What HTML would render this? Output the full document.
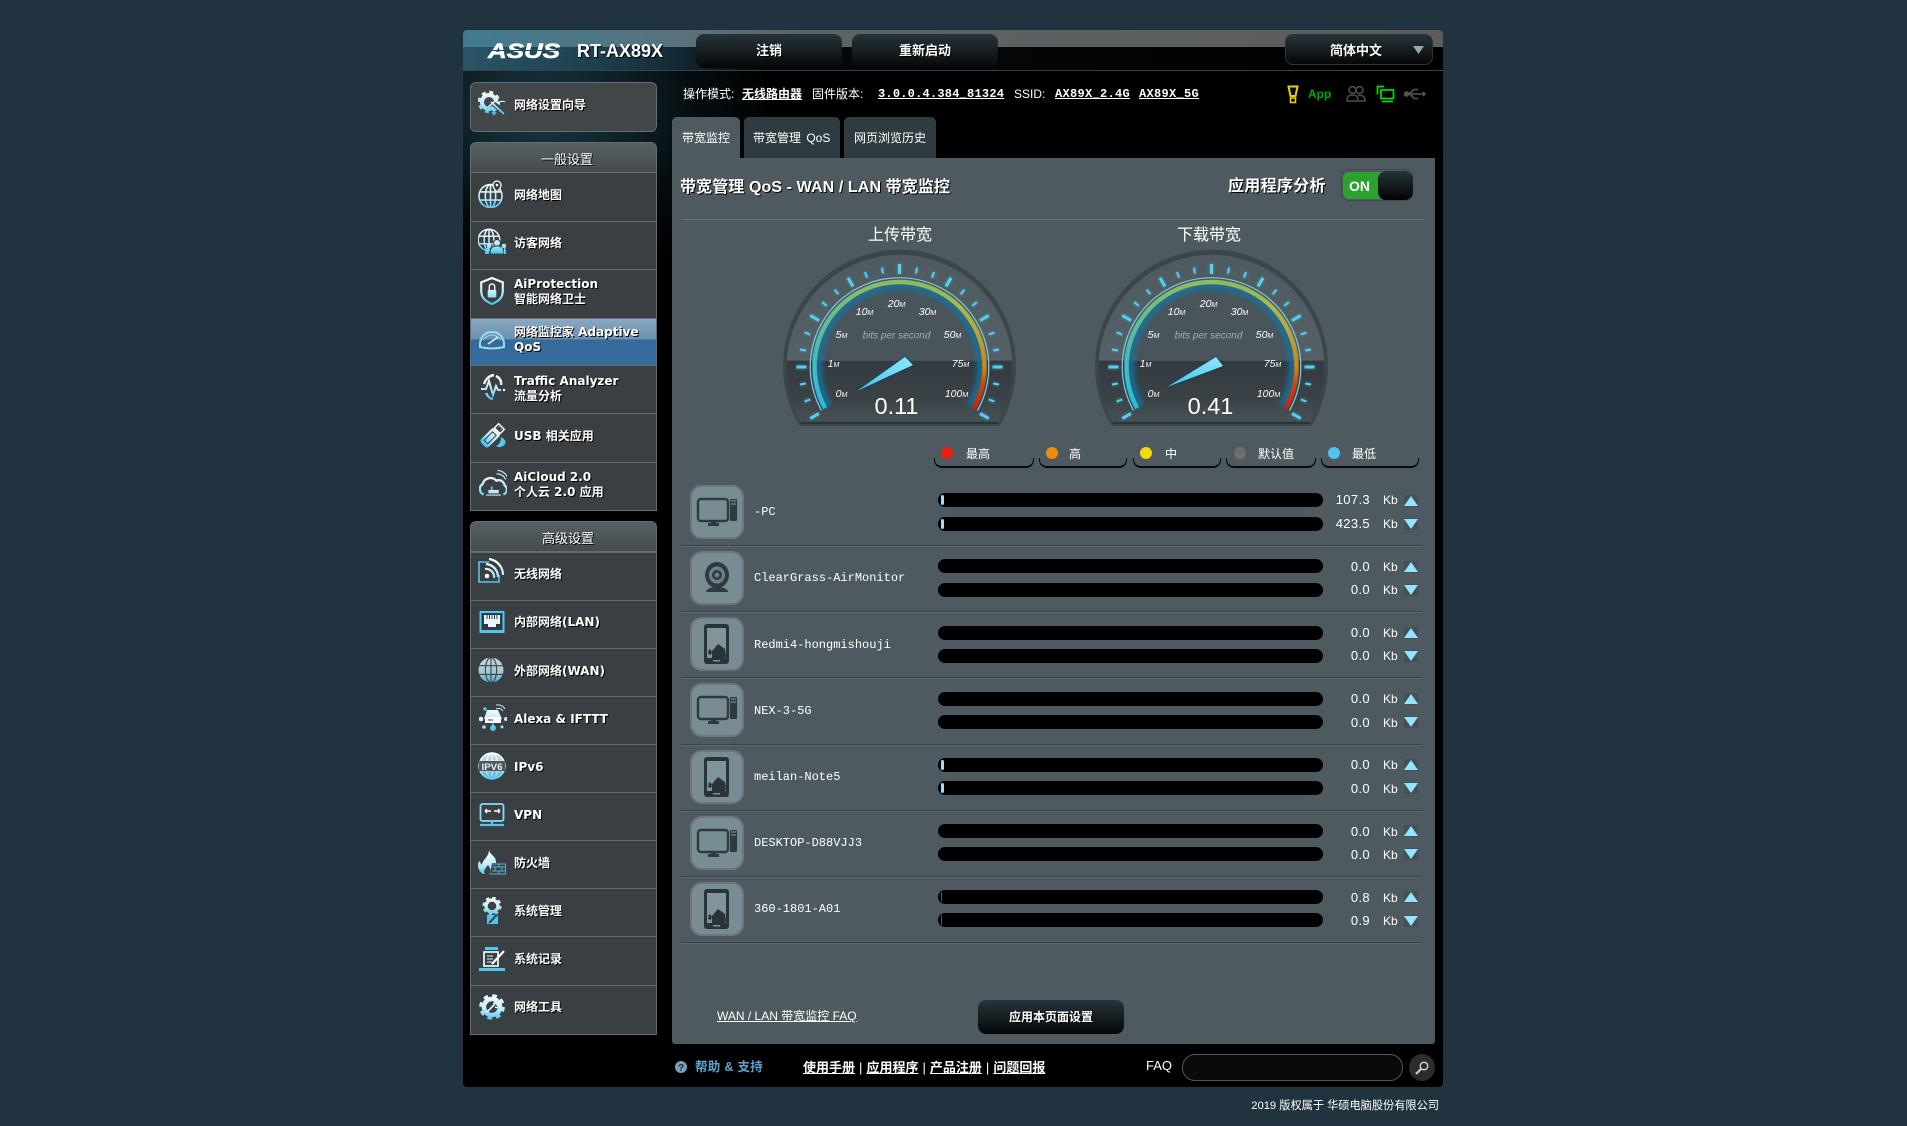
<!DOCTYPE html>
<html lang="zh-CN"><head><meta charset="utf-8"><title>ASUS RT-AX89X</title>
<style>
html,body{margin:0;padding:0;width:1907px;height:1126px;overflow:hidden;background:#21333e}
body{position:relative;font-family:"Liberation Sans","Noto Sans CJK SC",sans-serif;color:#fff;font-size:12px}
.a,.t,svg.i{position:absolute}
.t{white-space:nowrap;line-height:14px}
.u{text-decoration:underline}
#main{position:absolute;left:463px;top:30px;width:980px;height:1057px;border-radius:4px;background:#000;overflow:hidden}
#hd{position:absolute;left:0;top:0;width:980px;height:41px;background:linear-gradient(90deg,#2a5567 0,#1f4252 12%,#16303c 20%,#06090b 30%,#000 100%)}
#hd2{position:absolute;left:0;top:0;width:980px;height:17px;background:linear-gradient(90deg,#417a90 0,#4f7684 14%,#5b7078 24%,#5d6365 34%,#5c5c5c 100%)}
#hl{position:absolute;left:6px;top:40px;width:974px;height:1px;background:#3a4144}
#glow{position:absolute;left:0;top:41px;width:300px;height:460px;background:radial-gradient(ellipse 240px 170px at 80px 40px,rgba(34,78,96,.75),rgba(10,24,30,.5) 65%,rgba(0,0,0,0) 100%)}
.hb{position:absolute;background:linear-gradient(#26343b,#050708);border-radius:8px;text-align:center;font-weight:bold;font-size:13px;text-shadow:1px 1px 0 #000}
.r{position:absolute;left:470px;width:187px;box-sizing:border-box;background:#393f43;border:1px solid #666c6f}
.m{position:absolute;left:514px;white-space:nowrap;font:bold 12px/15px "DejaVu Sans","Noto Sans CJK SC",sans-serif;color:#fff;text-shadow:1px 1px 0 #000}
.h{position:absolute;left:470px;width:187px;height:31px;box-sizing:border-box;background:linear-gradient(#566064,#454c50);border:1px solid #666c6f;border-radius:6px 6px 0 0}
.tab{position:absolute;top:117px;height:41px;border-radius:5px 5px 0 0;background:#2f3b41}
.sep{position:absolute;left:681px;width:741px;height:1px;background:#38444a;box-shadow:0 1px 0 #5d696e}
.dev{position:absolute;left:690px;width:50px;height:50px;border:2px solid #6f7779;border-radius:12px;background:#788c93;overflow:hidden}
.dev svg{display:block;width:50px;height:50px}
.n{position:absolute;left:755px;font:12px/14px "Liberation Mono",monospace;white-space:nowrap;color:#fff}
.b{position:absolute;left:938px;width:385px;height:14px;border-radius:7px;background:#000}
.f{position:absolute;left:941px;width:3px;height:10px;border-radius:2px;background:#96e2fb}
.v{position:absolute;left:1310px;width:60px;text-align:right;font-size:13px;line-height:14px;letter-spacing:.35px}
.k{position:absolute;left:1383px;font-size:12px;line-height:14px}
.lg{position:absolute;top:458px;box-sizing:border-box;border:solid #0a0a0a;border-width:0 1px 2px 1px;border-radius:0 0 8px 8px;height:10px}
.dt{position:absolute;top:447px;width:12px;height:12px;border-radius:50%}
</style></head><body>
<svg width="0" height="0" style="position:absolute"><defs>
<linearGradient id="ig" gradientUnits="userSpaceOnUse" x1="0" y1="-12" x2="0" y2="13"><stop offset="0" stop-color="#fff"/><stop offset=".55" stop-color="#bfeaf8"/><stop offset="1" stop-color="#38bfee"/></linearGradient>
<linearGradient id="arcl" gradientUnits="userSpaceOnUse" x1="0" y1="41" x2="0" y2="-85"><stop offset="0" stop-color="#22c0de"/><stop offset=".4" stop-color="#44bcc0"/><stop offset=".75" stop-color="#6cbb88"/><stop offset="1" stop-color="#8dbb60"/></linearGradient>
<linearGradient id="arcr" gradientUnits="userSpaceOnUse" x1="0" y1="-85" x2="0" y2="41"><stop offset="0" stop-color="#8dbb60"/><stop offset=".2" stop-color="#aab84a"/><stop offset=".45" stop-color="#bfa030"/><stop offset=".68" stop-color="#c8861c"/><stop offset=".8" stop-color="#c84c10"/><stop offset="1" stop-color="#d0200c"/></linearGradient>
<linearGradient id="lo" x1="0" y1="0" x2="0" y2="1"><stop offset="0" stop-color="#333a3f"/><stop offset=".55" stop-color="#3a4247"/><stop offset="1" stop-color="#4c565b"/></linearGradient>
<linearGradient id="up" x1="0" y1="0" x2="0" y2="1"><stop offset="0" stop-color="#4e5a60"/><stop offset="1" stop-color="#5b686e"/></linearGradient>
<linearGradient id="nd" x1="0" y1="1" x2="1" y2="0"><stop offset="0" stop-color="#3fc2ee"/><stop offset="1" stop-color="#90e8ff"/></linearGradient>
<filter id="bl" x="-30%" y="-30%" width="160%" height="160%"><feGaussianBlur stdDeviation="2.5"/></filter>
<filter id="bl1" x="-30%" y="-30%" width="160%" height="160%"><feGaussianBlur stdDeviation="1.5"/></filter>
<clipPath id="gc"><path d="M-98 57A113 113 0 1 1 98 57Z"/></clipPath>
<g id="ticks" stroke="#4dd3f6">
<g stroke-width="3"><path d="M-103 0H-93" transform="rotate(-30)"/><path d="M-103 0H-93" transform="rotate(0)"/><path d="M-103 0H-93" transform="rotate(30)"/><path d="M-103 0H-93" transform="rotate(60)"/><path d="M-103 0H-93" transform="rotate(90)"/><path d="M-103 0H-93" transform="rotate(120)"/><path d="M-103 0H-93" transform="rotate(150)"/><path d="M-103 0H-93" transform="rotate(180)"/><path d="M-103 0H-93" transform="rotate(210)"/></g>
<g stroke-width="2"><path d="M-101 0H-95" transform="rotate(-20)"/><path d="M-101 0H-95" transform="rotate(-10)"/><path d="M-101 0H-95" transform="rotate(10)"/><path d="M-101 0H-95" transform="rotate(20)"/><path d="M-101 0H-95" transform="rotate(40)"/><path d="M-101 0H-95" transform="rotate(50)"/><path d="M-101 0H-95" transform="rotate(70)"/><path d="M-101 0H-95" transform="rotate(80)"/><path d="M-101 0H-95" transform="rotate(100)"/><path d="M-101 0H-95" transform="rotate(110)"/><path d="M-101 0H-95" transform="rotate(130)"/><path d="M-101 0H-95" transform="rotate(140)"/><path d="M-101 0H-95" transform="rotate(160)"/><path d="M-101 0H-95" transform="rotate(170)"/><path d="M-101 0H-95" transform="rotate(190)"/><path d="M-101 0H-95" transform="rotate(200)"/></g>
</g>
<g id="gauge">
<path d="M-100 59A116.500 116.500 0 1 1 100 59Z" fill="#3b464b"/>
<g clip-path="url(#gc)">
<circle r="113" fill="url(#up)"/>
<rect x="-120" y="-7" width="240" height="70" fill="url(#lo)"/>
<path d="M-117 -7H117" stroke="#5b686d" stroke-width="1"/>
<path d="M-84 -7A84 84 0 0 1 84 -7Z" fill="#4a555b"/>
<path d="M-101.600 56H101.600" stroke="#2d3539" stroke-width="2.500"/>
</g>
<use href="#ticks" filter="url(#bl1)" opacity=".55"/>
<use href="#ticks"/>
<path d="M-71 39A81 81 0 1 1 71 39" fill="none" stroke="#19729f" stroke-width="8" filter="url(#bl)" opacity=".8"/>
<path d="M-74.300 41.200A85 85 0 0 1 0 -85" fill="none" stroke="url(#arcl)" stroke-width="4.500"/>
<path d="M0 -85A85 85 0 0 1 74.300 41.200" fill="none" stroke="url(#arcr)" stroke-width="4.500"/>
<path d="M-78 43.500A89.300 89.300 0 1 1 78 43.500" fill="none" stroke="#7cc6d8" stroke-width="1.300"/>
</g>
<g id="pc"><rect x="8" y="14" width="30" height="22" rx="3" fill="none" stroke="#2f3a3f" stroke-width="2.400"/><rect x="18" y="38" width="11" height="3" fill="#2f3a3f"/><path d="M21 36h5v2h-5z" fill="#2f3a3f"/><rect x="40" y="14" width="7" height="22" rx="1" fill="#2f3a3f"/><path d="M41 16h5M41 19h5" stroke="#8a9ca2" stroke-width="1"/></g>
<g id="ph"><rect x="14" y="7" width="25" height="40" rx="3" fill="#2a3438"/><rect x="17" y="11" width="19" height="30" fill="#7f949b"/><path d="M22 34l6-7 7 5 1 7-1 2H22z" fill="#2a3438"/><path d="M19 32l3 2-1 4-3-1z" fill="#2a3438"/><rect x="23" y="43" width="7" height="1.500" fill="#7f949b"/></g>
<g id="cam"><ellipse cx="25" cy="22" rx="12" ry="13" fill="#2f3a3f"/><ellipse cx="25" cy="22" rx="8" ry="8.500" fill="#6f8188"/><circle cx="25" cy="22" r="5" fill="#2f3a3f"/><circle cx="25" cy="22" r="2.400" fill="#6f8188"/><path d="M14 39q1-5 11-5t11 5z" fill="#2f3a3f"/></g>
<g id="globe" fill="none" stroke="url(#ig)" stroke-width="1.400"><circle r="10"/><ellipse rx="4.500" ry="10"/><path d="M0-10V10M-9.500-3.500H9.500M-9.500 3.500H9.500"/></g>
<g id="gear"><circle r="9.500" fill="none" stroke="url(#ig)" stroke-width="3.400" stroke-dasharray="3.800 3.660"/><circle r="7" fill="none" stroke="url(#ig)" stroke-width="4"/></g>
</defs></svg>

<div id="main">
<div id="hd"></div><div id="hd2"></div><div id="glow"></div><div id="hl"></div>
</div>

<svg class="a" style="left:486px;top:40px" width="78" height="22"><text x="2" y="18" font-family="Liberation Sans" font-weight="bold" font-style="italic" font-size="21" fill="#fff" stroke="#fff" stroke-width=".5" textLength="72" lengthAdjust="spacingAndGlyphs">ASUS</text><path d="M0 10.500H78" stroke="#23505f" stroke-width="1"/></svg>
<div class="t" style="left:577px;top:41px;font:bold 18px/20px 'Liberation Sans',sans-serif;text-shadow:1px 1px 1px #000">RT-AX89X</div>
<div class="hb" style="left:696px;top:34px;width:146px;height:34px;line-height:33px">注销</div>
<div class="hb" style="left:852px;top:34px;width:146px;height:34px;line-height:33px">重新启动</div>
<div class="hb" style="left:1285px;top:34px;width:148px;height:31px;line-height:31px;border:1px solid #2c3439;box-sizing:border-box"><span style="position:relative;left:-3px">简体中文</span></div>
<svg class="a" style="left:1413px;top:46px" width="12" height="9"><path d="M0 0H11L5.500 8Z" fill="#93a9b5"/></svg>

<div class="t" style="left:683px;top:87px">操作模式:</div>
<div class="t u" style="left:742px;top:87px;font-weight:bold">无线路由器</div>
<div class="t" style="left:812px;top:87px">固件版本:</div>
<div class="t u" style="left:878px;top:87px;font:bold 12px/14px 'Liberation Mono',monospace;letter-spacing:.22px">3.0.0.4.384_81324</div>
<div class="t" style="left:1014px;top:87px">SSID:</div>
<div class="t u" style="left:1055px;top:87px;font:bold 12px/14px 'Liberation Mono',monospace;letter-spacing:.3px">AX89X_2.4G</div>
<div class="t u" style="left:1139px;top:87px;font:bold 12px/14px 'Liberation Mono',monospace;letter-spacing:.3px">AX89X_5G</div>

<svg class="a" style="left:1287px;top:85px" width="12" height="19"><path d="M1.500 1.500H10.500L8.500 11H3.500Z" fill="none" stroke="#e8d000" stroke-width="2"/><rect x="3.500" y="13" width="5" height="4.500" fill="none" stroke="#e8d000" stroke-width="1.600"/></svg>
<div class="t" style="left:1308px;top:87px;color:#00a800;font-weight:bold">App</div>
<svg class="a" style="left:1346px;top:85px" width="20" height="18" fill="none" stroke="#4c4c4c" stroke-width="1.600"><circle cx="6.500" cy="5" r="3.400"/><circle cx="13.500" cy="5" r="3.400"/><path d="M1 16c0-5 2-6 5.500-6s5.500 1 5.500 6zM12 10.200c4 0 7 .8 7 5.800h-6"/></svg>
<svg class="a" style="left:1376px;top:85px" width="19" height="18" fill="none" stroke="#00e000" stroke-width="1.700"><path d="M8 1.500H1.500V9.500"/><rect x="5" y="5" width="12.500" height="8.500"/><path d="M6 16.500H17"/></svg>
<svg class="a" style="left:1404px;top:87px" width="22" height="14" fill="none" stroke="#555" stroke-width="1.600"><path d="M1 7H20M5 7L10 2.500H14M6 7L10 11.500H14"/><circle cx="2.500" cy="7" r="2" fill="#555"/><path d="M19 5L21 7L19 9" fill="#555"/></svg>

<!-- sidebar -->
<div class="a" style="left:470px;top:82px;width:187px;height:50px;box-sizing:border-box;background:#414649;border:1px solid #676d70;border-radius:6px"></div>
<div class="m" style="top:98px">网络设置向导</div>

<div class="h" style="top:142px"></div><div class="t" style="left:541px;top:153px;font-size:13px;text-shadow:1px 1px 0 #000">一般设置</div>
<div class="r" style="top:172px;height:50px"></div>
<div class="r" style="top:221px;height:49px"></div>
<div class="r" style="top:269px;height:50px"></div>
<div class="r" style="top:318px;height:48px;background:linear-gradient(#8aa8c2 0,#6c90b0 44%,#356a9b 45%,#356a9b 100%)"></div>
<div class="r" style="top:365px;height:49px"></div>
<div class="r" style="top:413px;height:50px"></div>
<div class="r" style="top:462px;height:49px"></div>
<div class="m" style="top:188px">网络地图</div>
<div class="m" style="top:236px">访客网络</div>
<div class="m" style="top:277px">AiProtection<br>智能网络卫士</div>
<div class="m" style="top:325px">网络监控家 Adaptive<br>QoS</div>
<div class="m" style="top:374px">Traffic Analyzer<br>流量分析</div>
<div class="m" style="top:429px">USB 相关应用</div>
<div class="m" style="top:470px">AiCloud 2.0<br>个人云 2.0 应用</div>

<div class="h" style="top:521px"></div><div class="t" style="left:542px;top:532px;font-size:13px;text-shadow:1px 1px 0 #000">高级设置</div>
<div class="r" style="top:552px;height:49px"></div>
<div class="r" style="top:600px;height:49px"></div>
<div class="r" style="top:648px;height:49px"></div>
<div class="r" style="top:696px;height:49px"></div>
<div class="r" style="top:744px;height:49px"></div>
<div class="r" style="top:792px;height:49px"></div>
<div class="r" style="top:840px;height:49px"></div>
<div class="r" style="top:888px;height:49px"></div>
<div class="r" style="top:936px;height:50px"></div>
<div class="r" style="top:985px;height:50px"></div>
<div class="m" style="top:567px">无线网络</div>
<div class="m" style="top:615px">内部网络(LAN)</div>
<div class="m" style="top:664px">外部网络(WAN)</div>
<div class="m" style="top:712px">Alexa &amp; IFTTT</div>
<div class="m" style="top:760px">IPv6</div>
<div class="m" style="top:808px">VPN</div>
<div class="m" style="top:856px">防火墙</div>
<div class="m" style="top:904px">系统管理</div>
<div class="m" style="top:952px">系统记录</div>
<div class="m" style="top:1000px">网络工具</div>

<!-- sidebar icons -->
<svg class="i" style="left:478px;top:90px" width="28" height="28" viewBox="-14 -14 28 28"><g transform="translate(-3,-2)"><use href="#gear"/></g><path d="M-2 -3L13 9" stroke="#414649" stroke-width="5"/><path d="M-1-2L12 10M-4 3L6 -5" stroke="url(#ig)" stroke-width="1.600"/><path d="M2 6l1 2 2 1-2 1-1 2-1-2-2-1 2-1z" fill="#53c6ee"/><path d="M5 -1Q10-4 13-2" stroke="#fff" fill="none"/></svg>
<svg class="i" style="left:478px;top:180px" width="28" height="28" viewBox="-14 -14 28 28"><g transform="translate(-1.500,2) scale(1.150)"><use href="#globe"/></g><path d="M5-13a4 4 0 0 1 4 4c0 3-4 7-4 7s-4-4-4-7a4 4 0 0 1 4-4z" fill="#393f43" stroke="url(#ig)" stroke-width="1.300"/><circle cx="5" cy="-9" r="1.300" fill="#fff"/></svg>
<svg class="i" style="left:478px;top:228px" width="28" height="28" viewBox="-14 -14 28 28"><g transform="translate(-3,-2) scale(1.080)"><use href="#globe"/></g><circle cx="5" cy="1" r="3.500" fill="url(#ig)" stroke="#393f43"/><path d="M-2 12c0-7 3-8 7-8s7 1 7 8z" fill="url(#ig)" stroke="#393f43"/><circle cx="-3" cy="4" r="2.300" fill="url(#ig)"/><circle cx="12" cy="4" r="2.300" fill="url(#ig)"/><path d="M-7 12c0-5 1-6 4-6v6zM14 12c0-5-.5-6-2-6v6z" fill="url(#ig)"/></svg>
<svg class="i" style="left:478px;top:277px" width="28" height="28" viewBox="-14 -14 28 28"><g transform="scale(1.080)"><path d="M0-12L10-8V0C10 7 5 10 0 12C-5 10-10 7-10 0V-8Z" fill="none" stroke="url(#ig)" stroke-width="2"/><rect x="-4" y="-1" width="8" height="7" rx="1" fill="url(#ig)"/><path d="M-2.500-1V-4a2.500 2.500 0 0 1 5 0V-1" fill="none" stroke="#fff" stroke-width="1.300"/></g></svg>
<svg class="i" style="left:478px;top:325px" width="28" height="28" viewBox="-14 -14 28 28"><path d="M-12 8C-14-12 14-12 12 8Q0 11-12 8Z" fill="none" stroke="#8fe0fb" stroke-width="2"/><path d="M-4 5L6-2" stroke="#d7f4ff" stroke-width="1.500"/><path d="M-9 1Q0-9 9 1" fill="none" stroke="#bfeaf8" stroke-width=".8"/></svg>
<svg class="i" style="left:479px;top:373px" width="28" height="28" viewBox="-14 -14 28 28"><path d="M-12 2H-7L-4-6L0 8L3-1L5 3H8" fill="none" stroke="url(#ig)" stroke-width="2"/><path d="M-9-3Q-6-11 1-12M3-11Q9-8 8-2M-7 6Q-4 12 0 12" fill="none" stroke="url(#ig)" stroke-width="2.400"/><circle cx="11" cy="3" r="1.200" fill="#fff"/></svg>
<svg class="i" style="left:479px;top:421px" width="28" height="28" viewBox="-14 -14 28 28"><g transform="rotate(45) translate(0,1)"><rect x="-5.500" y="-7" width="11" height="20" rx="3" fill="url(#ig)"/><rect x="-4" y="-13" width="8" height="6" fill="none" stroke="#e9f8fd" stroke-width="1.500"/><path d="M-2-11H-1M1-11H2" stroke="#e9f8fd"/><path d="M-2.500 -3H2.500V9H-2.500Z" fill="none" stroke="#393f43"/></g><path d="M8 2Q14 5 12 9Q8 14 3 11Q8 9 8 2Z" fill="#55c7ee"/></svg>
<svg class="i" style="left:479px;top:469px" width="28" height="28" viewBox="-14 -14 28 28"><g transform="scale(1.150) translate(0,1)"><path d="M-8 9A5 5 0 0 1-9 0A7 7 0 0 1 3-3A5 5 0 0 1 10 1A4.500 4.500 0 0 1 9 9" fill="none" stroke="url(#ig)" stroke-width="2"/><rect x="-4" y="5" width="9" height="3" fill="#bfeaf8"/><path d="M-1 5V2M-6 9.500H7" stroke="#bfeaf8"/><path d="M3-9Q9-9 11-4M4-12Q11-11 13-5" fill="none" stroke="#bfeaf8"/></g></svg>

<svg class="i" style="left:476px;top:558px" width="28" height="28" viewBox="-14 -14 28 28"><path d="M-1-10H-11V10H9V3" fill="none" stroke="#53c6ee" stroke-width="1.600"/><circle cx="-3" cy="4" r="2.300" fill="#fff"/><path d="M-5-3A8 8 0 0 1 4 6M-4-8A13 13 0 0 1 8 5M-1-13A16 16 0 0 1 13 3" fill="none" stroke="url(#ig)" stroke-width="2.200"/></svg>
<svg class="i" style="left:478px;top:608px" width="28" height="28" viewBox="-14 -14 28 28"><rect x="-12.500" y="-11" width="25" height="22" fill="#53c6ee"/><rect x="-10.500" y="-9" width="21" height="17" fill="#2f3a3f"/><path d="M-8-7H8V2H4V5H-4V2H-8Z" fill="#e9f8fd"/><path d="M-5-7V-3M-2.500-7V-3M0-7V-3M2.500-7V-3M5-7V-3" stroke="#2f3a3f"/></svg>
<svg class="i" style="left:477px;top:656px" width="28" height="28" viewBox="-14 -14 28 28"><g transform="scale(1.250)"><circle r="10" fill="url(#ig)" opacity=".8"/><g stroke="#39454b" fill="none" stroke-width=".9"><ellipse rx="4.500" ry="10"/><path d="M0-10V10M-9.500-3.500H9.500M-9.500 3.500H9.500"/></g></g></svg>
<svg class="i" style="left:479px;top:704px" width="28" height="28" viewBox="-14 -14 28 28"><path d="M-6-8L-9 1H9L5-8Z" fill="url(#ig)"/><rect x="-8" y="-1" width="16" height="6" fill="#fff"/><path d="M-5 2H0" stroke="#393f43"/><circle cx="-12" cy="1" r="2.300" fill="#dff5fc"/><circle cx="13" cy="1" r="2" fill="#bfeaf8"/><circle cx="0" cy="10" r="3" fill="#53c6ee"/><circle cx="-8" cy="-9" r="1.800" fill="#53c6ee"/><circle cx="-9" cy="9" r="1.800" fill="#9fe0f7"/><circle cx="9" cy="9" r="1.500" fill="#9fe0f7"/><path d="M3-9Q7-11 10-7M3-13Q9-14 12-9" fill="none" stroke="#bfeaf8"/><path d="M0 5V9" stroke="#9fe0f7"/></svg>
<svg class="i" style="left:478px;top:752px" width="28" height="28" viewBox="-14 -14 28 28"><g transform="scale(1.280)"><circle r="10" fill="url(#ig)" opacity=".8"/><use href="#globe"/></g><rect x="-13" y="-5" width="26" height="10" fill="#393f43" opacity=".85"/><text x="0" y="4" text-anchor="middle" font-family="Liberation Sans" font-weight="bold" font-size="9.500" fill="#e6f7fd" textLength="21" lengthAdjust="spacingAndGlyphs">IPV6</text></svg>
<svg class="i" style="left:478px;top:801px" width="28" height="28" viewBox="-14 -14 28 28"><rect x="-11.500" y="-11" width="23" height="17" rx="2" fill="none" stroke="#8adcf6" stroke-width="1.800"/><path d="M-7-4H-1M-7-4L-5-6M-7-4L-5-2M2-4H8M8-4L6-6M8-4L6-2" stroke="#fff" stroke-width="1.400" fill="none"/><path d="M0 6V9M-12 10H12" stroke="#53c6ee" stroke-width="2.200"/></svg>
<svg class="i" style="left:478px;top:849px" width="28" height="28" viewBox="-14 -14 28 28"><path d="M-3-13C-2-8 4-7 4-1C5 1 5 3 5 5L3 11H-9C-14 8-15 3-13-2L-10 2C-10-3-3-6-3-13Z" fill="url(#ig)"/><path d="M-4 2C-1 6-1 9-3 11H-7C-9 8-7 6-4 2Z" fill="#393f43"/><path d="M0 0H14V11H-2" fill="#393f43"/><path d="M0 1H13.500V11H-2M7 1V4M0 4H13.500M3 4V8M10 4V8M0 8H13.500M7 8V11" fill="none" stroke="#58afcf" stroke-width="1.100"/></svg>
<svg class="i" style="left:478px;top:897px" width="28" height="28" viewBox="-14 -14 28 28"><g transform="translate(0,-5)scale(.85)"><use href="#gear"/></g><path d="M-5 4H5A1 1 0 0 1 6 5V13H-5Z" fill="#53c6ee"/><path d="M-3 12L2 7A2.500 2.500 0 0 1 5 5" stroke="#393f43" stroke-width="2" fill="none"/></svg>
<svg class="i" style="left:478px;top:945px" width="28" height="28" viewBox="-14 -14 28 28"><rect x="-7" y="-12" width="13" height="3" fill="#53c6ee"/><path d="M-8-7H6V7H-8Z" fill="none" stroke="#dff5fc" stroke-width="1.800"/><path d="M-5-3H1M-5 0H1M-5 3H0" stroke="#dff5fc"/><path d="M0 5L12-8" stroke="#fff" stroke-width="2.200"/><path d="M-13 9H13V12H-13Z" fill="#53c6ee"/></svg>
<svg class="i" style="left:478px;top:993px" width="28" height="28" viewBox="-14 -14 28 28"><g transform="scale(1.150)"><use href="#gear"/></g><path d="M-5 5L2-2A3.500 3.500 0 0 1 6-6L4-3.500L5.500-2L8-4A3.500 3.500 0 0 1 3 0" fill="none" stroke="#dff5fc" stroke-width="1.700"/></svg>

<!-- tabs + panel -->
<div class="tab" style="left:672px;width:68px;background:#4e5a5f"></div>
<div class="tab" style="left:744px;width:96px"></div>
<div class="tab" style="left:844px;width:92px"></div>
<div class="t" style="left:682px;top:131px">带宽监控</div>
<div class="t" style="left:753px;top:131px;word-spacing:2px">带宽管理 QoS</div>
<div class="t" style="left:854px;top:131px">网页浏览历史</div>
<div class="a" style="left:672px;top:158px;width:763px;height:886px;background:#4e5a5f;border-radius:0 0 3px 3px"></div>
<div class="t" style="left:680px;top:179px;font-size:16px;line-height:18px;font-weight:bold;text-shadow:1px 1px 0 #000;letter-spacing:.1px">带宽管理 QoS - WAN / LAN 带宽监控</div>
<div class="t" style="left:1228px;top:178px;font-size:16px;line-height:18px;font-weight:bold;text-shadow:1px 1px 0 #000;letter-spacing:.3px">应用程序分析</div>
<div class="a" style="left:1341px;top:169px;width:72px;height:32px;border:1px solid #3f4a4f;box-sizing:border-box;border-radius:8px"></div>
<div class="a" style="left:1343px;top:172px;width:50px;height:27px;background:#2ca22e;border-radius:6px"></div>
<div class="a" style="left:1378px;top:171px;width:35px;height:29px;background:linear-gradient(#26343b,#020303);border-radius:8px"></div>
<div class="t" style="left:1349px;top:179px;font-size:14px;font-weight:bold">ON</div>
<div class="a" style="left:683px;top:219px;width:741px;height:1px;background:#697679"></div>
<div class="t" style="left:868px;top:227px;font-size:16px;line-height:18px">上传带宽</div>
<div class="t" style="left:1177px;top:227px;font-size:16px;line-height:18px">下载带宽</div>

<svg class="a" style="left:760px;top:240px;overflow:visible" width="620" height="200" font-family="Liberation Sans" fill="#fff">
<g transform="translate(139.500,127)"><use href="#gauge"/>
<g font-style="italic" font-size="10.500" text-anchor="middle"><text x="-58" y="30">0<tspan font-size="7">M</tspan></text><text x="-66" y="0">1<tspan font-size="7">M</tspan></text><text x="-58" y="-29">5<tspan font-size="7">M</tspan></text><text x="-35" y="-52">10<tspan font-size="7">M</tspan></text><text x="-3" y="-60">20<tspan font-size="7">M</tspan></text><text x="28" y="-52">30<tspan font-size="7">M</tspan></text><text x="53" y="-29">50<tspan font-size="7">M</tspan></text><text x="61" y="0">75<tspan font-size="7">M</tspan></text><text x="57" y="30">100<tspan font-size="7">M</tspan></text><text x="-3" y="-28.500" font-size="10" fill="#a2adb1">bits per second</text></g>
<path d="M-42 24L6-10L14-2Z" fill="#14425c" filter="url(#bl1)"/><path d="M-42.500 24L5.500-10L13.500-2Z" fill="url(#nd)"/>
<text x="-3" y="47" font-size="23.500" text-anchor="middle">0.11</text></g>
<g transform="translate(451.500,127)"><use href="#gauge"/>
<g font-style="italic" font-size="10.500" text-anchor="middle"><text x="-58" y="30">0<tspan font-size="7">M</tspan></text><text x="-66" y="0">1<tspan font-size="7">M</tspan></text><text x="-58" y="-29">5<tspan font-size="7">M</tspan></text><text x="-35" y="-52">10<tspan font-size="7">M</tspan></text><text x="-3" y="-60">20<tspan font-size="7">M</tspan></text><text x="28" y="-52">30<tspan font-size="7">M</tspan></text><text x="53" y="-29">50<tspan font-size="7">M</tspan></text><text x="61" y="0">75<tspan font-size="7">M</tspan></text><text x="57" y="30">100<tspan font-size="7">M</tspan></text><text x="-3" y="-28.500" font-size="10" fill="#a2adb1">bits per second</text></g>
<path d="M-44 20L5-10L12-1Z" fill="#14425c" filter="url(#bl1)"/><path d="M-44.500 20L4.500-10L11.500-1Z" fill="url(#nd)"/>
<text x="-1" y="47" font-size="23.500" text-anchor="middle">0.41</text></g>
</svg>

<!-- legend -->
<div class="lg" style="left:934px;width:100px"></div><div class="lg" style="left:1039px;width:88px"></div><div class="lg" style="left:1133px;width:88px"></div><div class="lg" style="left:1226px;width:90px"></div><div class="lg" style="left:1321px;width:98px"></div>
<div class="dt" style="left:941px;background:#e8200c"></div><div class="dt" style="left:1046px;background:#ee8a0c"></div><div class="dt" style="left:1140px;background:#f2d90a"></div><div class="dt" style="left:1234px;background:#6e6e6e"></div><div class="dt" style="left:1328px;background:#4ec4ee"></div>
<div class="t" style="left:966px;top:447px">最高</div><div class="t" style="left:1069px;top:447px">高</div><div class="t" style="left:1165px;top:447px">中</div><div class="t" style="left:1258px;top:447px">默认值</div><div class="t" style="left:1352px;top:447px">最低</div>

<!-- rows -->
<div class="sep" style="top:545px"></div><div class="sep" style="top:611px"></div><div class="sep" style="top:677px"></div><div class="sep" style="top:744px"></div><div class="sep" style="top:810px"></div><div class="sep" style="top:876px"></div><div class="sep" style="top:942px"></div>
<div class="dev" style="top:485px"><svg viewBox="2 2 50 50"><use href="#pc"/></svg></div>
<div class="dev" style="top:551px"><svg viewBox="0 0 50 50"><use href="#cam"/></svg></div>
<div class="dev" style="top:617px"><svg viewBox="2 2 50 50"><use href="#ph"/></svg></div>
<div class="dev" style="top:683px"><svg viewBox="2 2 50 50"><use href="#pc"/></svg></div>
<div class="dev" style="top:750px"><svg viewBox="2 2 50 50"><use href="#ph"/></svg></div>
<div class="dev" style="top:816px"><svg viewBox="2 2 50 50"><use href="#pc"/></svg></div>
<div class="dev" style="top:882px"><svg viewBox="2 2 50 50"><use href="#ph"/></svg></div>
<div class="n" style="top:505px;left:754px">-PC</div>
<div class="n" style="top:571px;left:754px">ClearGrass-AirMonitor</div>
<div class="n" style="top:638px;left:754px">Redmi4-hongmishouji</div>
<div class="n" style="top:704px;left:754px">NEX-3-5G</div>
<div class="n" style="top:770px;left:754px">meilan-Note5</div>
<div class="n" style="top:836px;left:754px">DESKTOP-D88VJJ3</div>
<div class="n" style="top:902px;left:754px">360-1801-A01</div>

<div class="b" style="top:493px"></div><div class="b" style="top:517px"></div><div class="f" style="top:495px"></div><div class="f" style="top:519px"></div>
<div class="b" style="top:559px"></div><div class="b" style="top:583px"></div>
<div class="b" style="top:626px"></div><div class="b" style="top:649px"></div>
<div class="b" style="top:692px"></div><div class="b" style="top:715px"></div>
<div class="b" style="top:758px"></div><div class="b" style="top:781px"></div><div class="f" style="top:760px"></div><div class="f" style="top:783px"></div>
<div class="b" style="top:824px"></div><div class="b" style="top:847px"></div>
<div class="b" style="top:890px"></div><div class="b" style="top:913px"></div><div class="f" style="top:892px;width:1px;background:#3a5d6b"></div><div class="f" style="top:915px;width:1px;background:#3a5d6b"></div>

<div class="v" style="top:493px">107.3</div><div class="k" style="top:493px">Kb</div>
<div class="v" style="top:517px">423.5</div><div class="k" style="top:517px">Kb</div>
<div class="v" style="top:560px">0.0</div><div class="k" style="top:560px">Kb</div>
<div class="v" style="top:583px">0.0</div><div class="k" style="top:583px">Kb</div>
<div class="v" style="top:626px">0.0</div><div class="k" style="top:626px">Kb</div>
<div class="v" style="top:649px">0.0</div><div class="k" style="top:649px">Kb</div>
<div class="v" style="top:692px">0.0</div><div class="k" style="top:692px">Kb</div>
<div class="v" style="top:716px">0.0</div><div class="k" style="top:716px">Kb</div>
<div class="v" style="top:758px">0.0</div><div class="k" style="top:758px">Kb</div>
<div class="v" style="top:782px">0.0</div><div class="k" style="top:782px">Kb</div>
<div class="v" style="top:825px">0.0</div><div class="k" style="top:825px">Kb</div>
<div class="v" style="top:848px">0.0</div><div class="k" style="top:848px">Kb</div>
<div class="v" style="top:891px">0.8</div><div class="k" style="top:891px">Kb</div>
<div class="v" style="top:914px">0.9</div><div class="k" style="top:914px">Kb</div>

<svg class="a" style="left:1404px;top:490px;overflow:visible" width="14" height="440" fill="#93e5ff">
<g fill="#445056"><rect y="5" width="14" height="12"/><rect y="28" width="14" height="12"/><rect y="71" width="14" height="12"/><rect y="94" width="14" height="12"/><rect y="137" width="14" height="12"/><rect y="160" width="14" height="12"/><rect y="203" width="14" height="12"/><rect y="226" width="14" height="12"/><rect y="269" width="14" height="12"/><rect y="292" width="14" height="12"/><rect y="335" width="14" height="12"/><rect y="358" width="14" height="12"/><rect y="401" width="14" height="12"/><rect y="425" width="14" height="12"/></g>
<path d="M7 6L14 16H0Z"/><path d="M0 29H14L7 39Z"/><path d="M7 72L14 82H0Z"/><path d="M0 95H14L7 105Z"/><path d="M7 138L14 148H0Z"/><path d="M0 161H14L7 171Z"/><path d="M7 204L14 214H0Z"/><path d="M0 227H14L7 237Z"/><path d="M7 270L14 280H0Z"/><path d="M0 293H14L7 303Z"/><path d="M7 336L14 346H0Z"/><path d="M0 359H14L7 369Z"/><path d="M7 402L14 412H0Z"/><path d="M0 426H14L7 436Z"/>
</svg>

<!-- panel bottom -->
<div class="t u" style="left:717px;top:1009px">WAN / LAN 带宽监控 FAQ</div>
<div class="hb" style="left:978px;top:1000px;width:146px;height:34px;line-height:35px;font-size:12px">应用本页面设置</div>

<!-- footer -->
<svg class="a" style="left:675px;top:1061px" width="12" height="12"><circle cx="6" cy="6" r="6" fill="#7aa0b4"/><text x="6" y="10" text-anchor="middle" font-family="Liberation Sans" font-weight="bold" font-size="10" fill="#1a2a33">?</text></svg>
<div class="t" style="left:695px;top:1060px;color:#5aa4d2;font-weight:bold;font-size:12.500px;letter-spacing:.3px">帮助 &amp; 支持</div>
<div class="t" style="left:803px;top:1061px;font-size:13px;font-weight:bold;word-spacing:.4px"><span class="u">使用手册</span> <span style="font-weight:normal">|</span> <span class="u">应用程序</span> <span style="font-weight:normal">|</span> <span class="u">产品注册</span> <span style="font-weight:normal">|</span> <span class="u">问题回报</span></div>
<div class="t" style="left:1146px;top:1059px;font-size:13px">FAQ</div>
<div class="a" style="left:1182px;top:1054px;width:221px;height:27px;box-sizing:border-box;border:1px solid #555;border-radius:13px;background:#0a0a0a"></div>
<div class="a" style="left:1409px;top:1054px;width:26px;height:27px;border-radius:50%;background:#2c2c2c"></div>
<svg class="a" style="left:1414px;top:1060px" width="16" height="16" fill="none" stroke="#c9c9c9"><circle cx="10" cy="6" r="3.800" stroke-width="1.500"/><path d="M7 9L2 14" stroke-width="2.200"/></svg>
<div class="t" style="right:468px;top:1099px;font-size:11.200px">2019 版权属于 华硕电脑股份有限公司</div>
</body></html>
